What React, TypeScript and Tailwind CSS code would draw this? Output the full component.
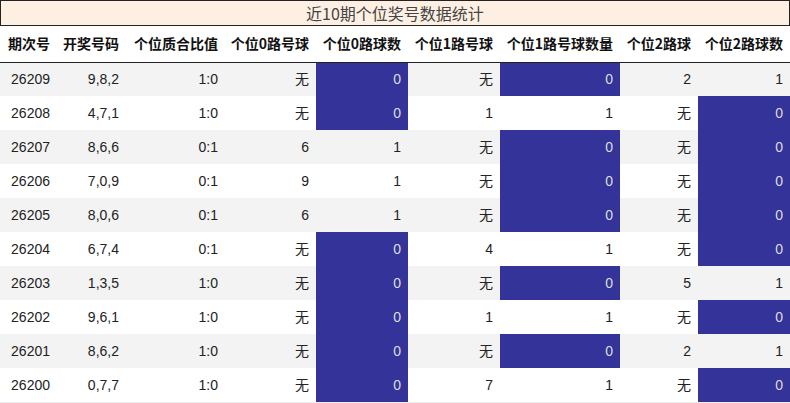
import React from 'react';

type Row = [string, string, string, string, string, string, string, string, string];

const ROWS: Row[] = [
  ['26209', '9,8,2', '1:0', '无', '0', '无', '0', '2', '1'],
  ['26208', '4,7,1', '1:0', '无', '0', '1', '1', '无', '0'],
  ['26207', '8,6,6', '0:1', '6', '1', '无', '0', '无', '0'],
  ['26206', '7,0,9', '0:1', '9', '1', '无', '0', '无', '0'],
  ['26205', '8,0,6', '0:1', '6', '1', '无', '0', '无', '0'],
  ['26204', '6,7,4', '0:1', '无', '0', '4', '1', '无', '0'],
  ['26203', '1,3,5', '1:0', '无', '0', '无', '0', '5', '1'],
  ['26202', '9,6,1', '1:0', '无', '0', '1', '1', '无', '0'],
  ['26201', '8,6,2', '1:0', '无', '0', '无', '0', '2', '1'],
  ['26200', '0,7,7', '1:0', '无', '0', '7', '1', '无', '0'],
];

const HEADERS = ['期次号', '开奖号码', '个位质合比值', '个位0路号球', '个位0路球数', '个位1路号球', '个位1路号球数量', '个位2路球', '个位2路球数'];
const WIDTHS = ['w-[57px]', 'w-[69px]', 'w-[99px]', 'w-[91px]', 'w-[92px]', 'w-[92px]', 'w-[120px]', 'w-[78px]', 'w-[92px]'];
// count columns get highlighted when value is 0
const COUNT_COLS = [4, 6, 8];

export default function App() {
  return (
    <div className="w-[790px] bg-white font-['Liberation_Sans','Noto_Sans_CJK_SC',sans-serif]">
      <div className="h-[26px] border border-[#222] bg-[#fdf0e2] flex items-center justify-center text-[16px] text-[#444] font-['Noto_Sans_CJK_SC',sans-serif] leading-none">
        近10期个位奖号数据统计
      </div>
      <table className="w-[790px] table-fixed border-collapse">
        <colgroup>
          {WIDTHS.map((w, i) => (
            <col key={i} className={w} />
          ))}
        </colgroup>
        <thead>
          <tr className="h-[36px] border-b border-[#222]">
            {HEADERS.map((h) => (
              <th
                key={h}
                className="p-0 pr-[7px] text-right text-[14px] font-bold text-[#111] whitespace-nowrap font-['Noto_Sans_CJK_SC',sans-serif]"
              >
                {h}
              </th>
            ))}
          </tr>
        </thead>
        <tbody>
          {ROWS.map((row, r) => (
            <tr key={row[0]} className={`h-[34px] ${r % 2 === 0 ? 'bg-[#f3f3f3]' : 'bg-white'}`}>
              {row.map((v, c) => {
                const hot = COUNT_COLS.includes(c) && v === '0';
                return (
                  <td
                    key={c}
                    className={`p-0 pr-[7px] text-right text-[14px] ${hot ? 'bg-[#333399] text-[#dddddd]' : 'text-[#222]'}`}
                  >
                    {v}
                  </td>
                );
              })}
            </tr>
          ))}
        </tbody>
      </table>
      <div className="h-px bg-[#eeeeee]" />
    </div>
  );
}
